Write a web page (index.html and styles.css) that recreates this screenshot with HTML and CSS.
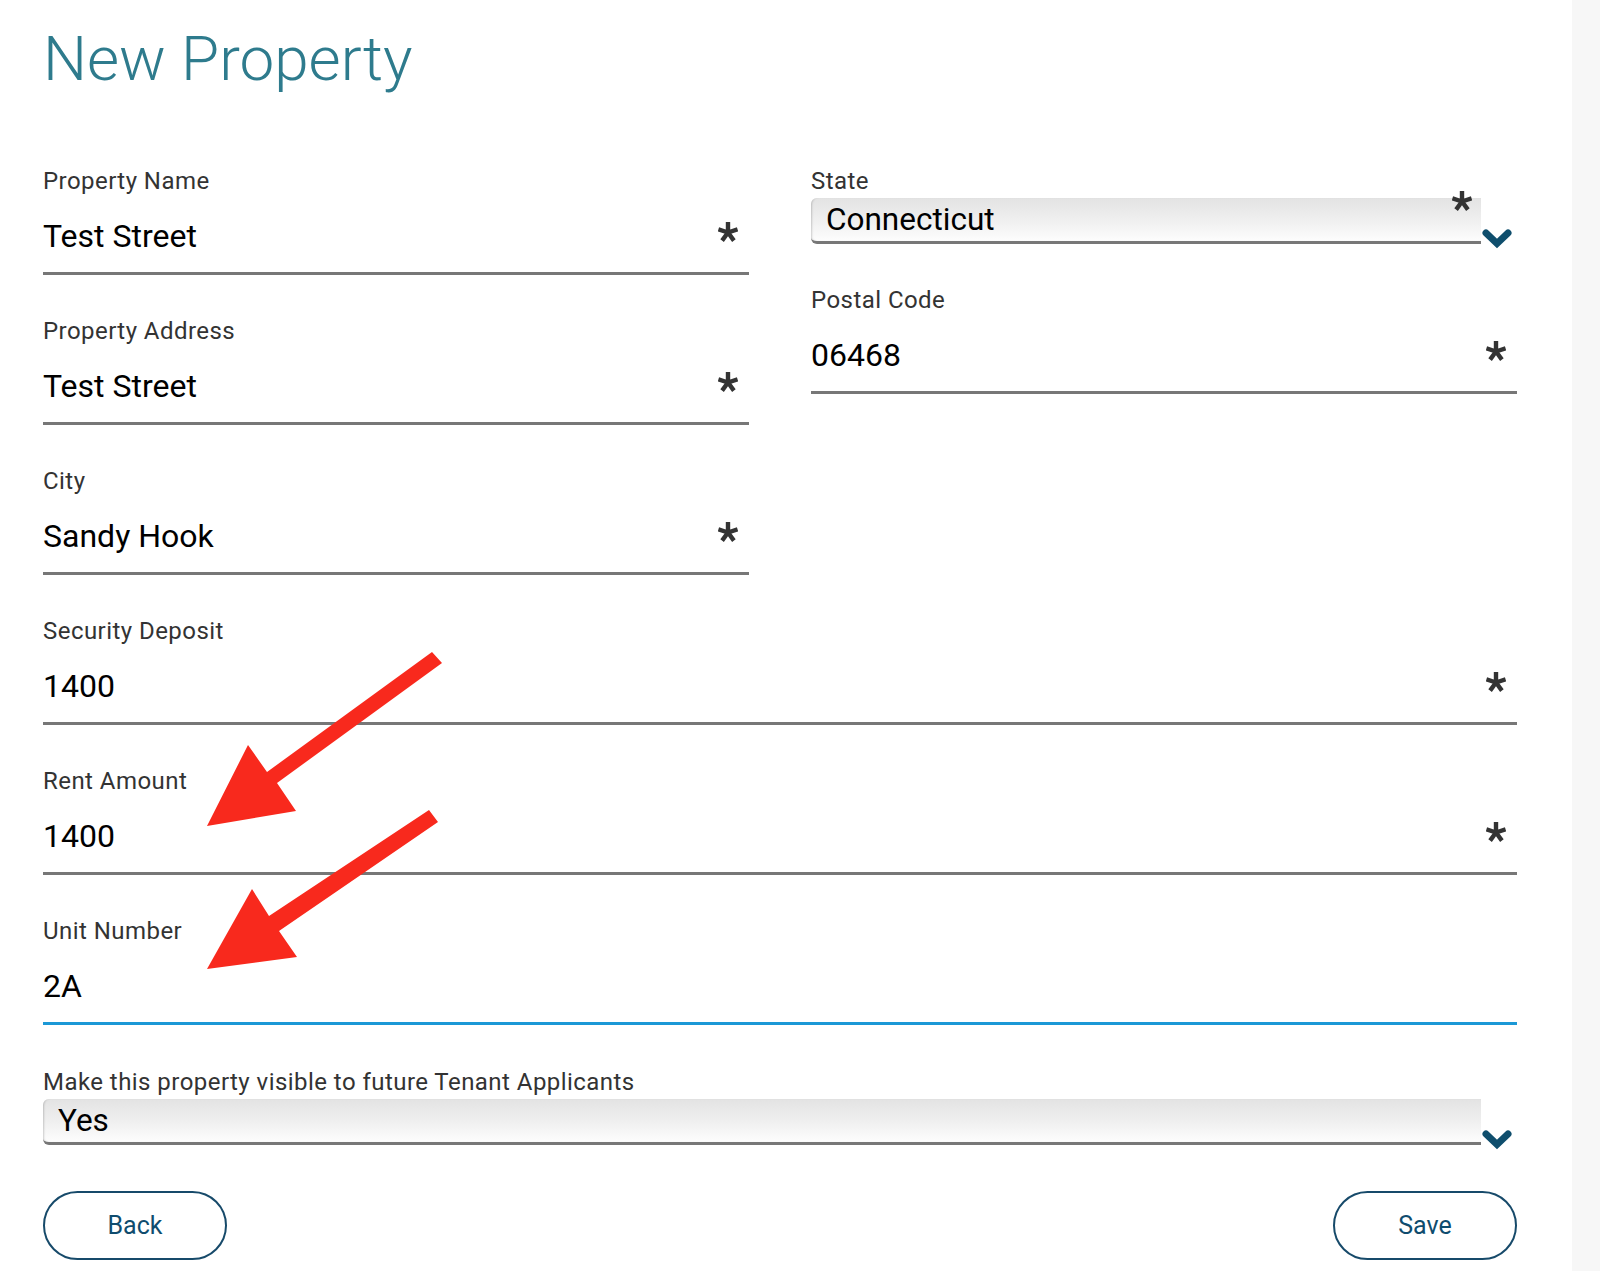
FILE: index.html
```html
<!DOCTYPE html>
<html lang="en">
<head>
    <meta charset="UTF-8">
    <meta name="viewport" content="width=device-width, initial-scale=1.0">
    <title>New Property</title>
    <link rel="stylesheet" href="styles.css">
</head>
<body>
    <svg class="defs" aria-hidden="true">
        <symbol id="star" viewBox="0 0 20 20">
            <path d="M10 10.5V0M10 10.5L19.6 7.4M10 10.5L15.9 18.6M10 10.5L4.1 18.6M10 10.5L0.4 7.4" stroke="#333" stroke-width="4.4" fill="none"/>
        </symbol>
        <symbol id="chevron" viewBox="0 0 30 20">
            <polyline points="4,4 15,14.5 26,4" stroke="#0f4e6d" stroke-width="7" stroke-linecap="round" fill="none"/>
        </symbol>
    </svg>

    <div class="page">
        <main class="content">
            <h1>New Property</h1>

            <form class="property-form">
                <div class="columns">
                    <div class="column">
                        <div class="field">
                            <label>Property Name</label>
                            <div class="control">
                                <input type="text" value="Test Street">
                                <svg class="req"><use href="#star"/></svg>
                            </div>
                        </div>
                        <div class="field">
                            <label>Property Address</label>
                            <div class="control">
                                <input type="text" value="Test Street">
                                <svg class="req"><use href="#star"/></svg>
                            </div>
                        </div>
                        <div class="field">
                            <label>City</label>
                            <div class="control">
                                <input type="text" value="Sandy Hook">
                                <svg class="req"><use href="#star"/></svg>
                            </div>
                        </div>
                    </div>

                    <div class="column">
                        <div class="field">
                            <label>State</label>
                            <div class="select-row">
                                <select>
                                    <option>Connecticut</option>
                                </select>
                                <svg class="req req-corner"><use href="#star"/></svg>
                                <svg class="chevron"><use href="#chevron"/></svg>
                            </div>
                        </div>
                        <div class="field">
                            <label>Postal Code</label>
                            <div class="control">
                                <input type="text" value="06468">
                                <svg class="req"><use href="#star"/></svg>
                            </div>
                        </div>
                    </div>
                </div>

                <div class="field">
                    <label>Security Deposit</label>
                    <div class="control">
                        <input type="text" value="1400">
                        <svg class="req"><use href="#star"/></svg>
                    </div>
                </div>
                <div class="field">
                    <label>Rent Amount</label>
                    <div class="control">
                        <input type="text" value="1400">
                        <svg class="req"><use href="#star"/></svg>
                    </div>
                </div>
                <div class="field">
                    <label>Unit Number</label>
                    <div class="control focused">
                        <input type="text" value="2A">
                    </div>
                </div>

                <div class="field field-visible">
                    <label>Make this property visible to future Tenant Applicants</label>
                    <div class="select-row">
                        <select>
                            <option>Yes</option>
                            <option>No</option>
                        </select>
                        <svg class="chevron"><use href="#chevron"/></svg>
                    </div>
                </div>

                <div class="actions">
                    <button type="button" class="btn">Back</button>
                    <button type="button" class="btn">Save</button>
                </div>
            </form>
        </main>
        <aside class="side-strip"></aside>
    </div>

    <!-- red annotation arrows -->
    <svg class="annotations" viewBox="0 0 1600 1271">
        <polygon points="432,652 442,663 277,783 296,811 207,826 248,745 267,772" fill="#f8291d"/>
        <polygon points="429,810 438,822 279,931 297,957 207,969 252,889 269,916" fill="#f8291d"/>
    </svg>
</body>
</html>
```

FILE: styles.css
```css
body {
    margin: 0;
    padding: 0;
    font-family: Roboto, "Noto Sans", sans-serif;
    background-color: #fff;
    position: relative;
    overflow: hidden;
}
.defs {
    position: absolute;
    width: 0;
    height: 0;
}
.page {
    display: flex;
    min-height: 1271px;
}
.content {
    width: 1474px;
    padding: 21px 55px 0 43px;
}
.side-strip {
    flex: 1;
    background-color: #f7f7f7;
}
h1 {
    margin: 0;
    font-size: 62px;
    line-height: 75px;
    font-weight: 300;
    color: #2e7b8d;
}
.columns {
    display: grid;
    grid-template-columns: 1fr 1fr;
    column-gap: 62px;
    margin-top: 71px;
}
.field {
    margin-top: 42px;
}
.column .field:first-child {
    margin-top: 0;
}
.field label {
    display: block;
    font-size: 24px;
    line-height: 28px;
    letter-spacing: 0.45px;
    color: #333;
}
.control {
    display: flex;
    align-items: center;
    box-sizing: border-box;
    height: 80px;
    padding: 22px 11px 17px 0;
    border-bottom: 3px solid #777;
}
.control.focused {
    border-bottom-color: #1b98d6;
}
.control input {
    flex: 1;
    min-width: 0;
    height: 38px;
    padding: 0;
    border: 0;
    outline: 0;
    background: transparent;
    font-family: Roboto, sans-serif;
    font-size: 32px;
    color: #000;
}
.req {
    width: 20px;
    height: 20px;
    margin-bottom: 8px;
    overflow: visible;
}
.select-row {
    display: flex;
    align-items: flex-end;
    margin-top: 3px;
    position: relative;
}
.select-row select {
    flex: 1;
    min-width: 0;
    height: 46px;
    box-sizing: border-box;
    -webkit-appearance: none;
    appearance: none;
    border: 0;
    border-bottom: 3px solid #777;
    border-radius: 6px 0 0 6px;
    background: linear-gradient(#e3e3e3, #f0f0f0 55%, #fdfdfd);
    box-shadow: inset 2px 0 2px -1px rgba(0, 0, 0, 0.18);
    padding: 0 40px 0 15px;
    font-family: Roboto, sans-serif;
    font-size: 31.5px;
    color: #000;
    outline: 0;
}
.req-corner {
    position: absolute;
    top: -7px;
    right: 45px;
    margin: 0;
}
.chevron {
    width: 30px;
    height: 20px;
    margin: 0 5px -5px 1px;
}
.field-visible {
    margin-top: 43px;
}
.actions {
    display: flex;
    justify-content: space-between;
    margin-top: 46px;
}
.btn {
    width: 184px;
    height: 69px;
    border: 2px solid #174a6a;
    border-radius: 35px;
    background-color: #fff;
    color: #0f4c6e;
    font-family: Roboto, sans-serif;
    font-size: 25px;
    cursor: pointer;
}
.annotations {
    position: absolute;
    top: 0;
    left: 0;
    width: 1600px;
    height: 1271px;
    pointer-events: none;
}
```
